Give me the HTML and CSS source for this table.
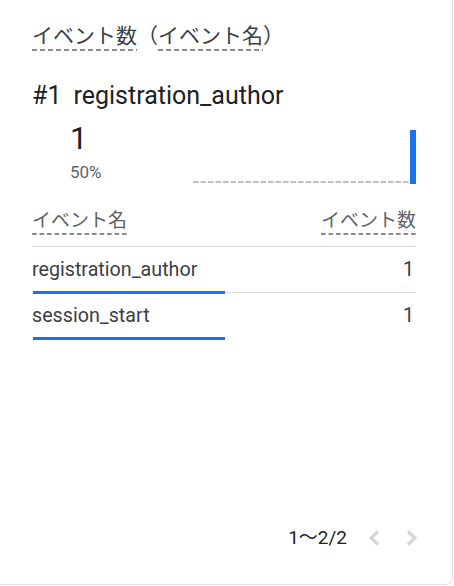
FILE: index.html
```html
<!DOCTYPE html>
<html lang="ja">
<head>
<meta charset="utf-8">
<title>イベント数（イベント名）</title>
<link rel="stylesheet" href="styles.css">
</head>
<body>
<div class="card">
  <div class="title">
    <span class="dim">イベント数</span><span class="paren">（</span><span class="dim">イベント名</span><span class="paren">）</span>
  </div>
  <div class="headline"><span class="rank">#1</span><span>registration_author</span></div>
  <div class="metrics">
    <div class="metric-values">
      <div class="big">1</div>
      <div class="pct">50%</div>
    </div>
    <div class="spark">
      <div class="baseline"></div>
      <div class="bar"></div>
    </div>
  </div>
  <div class="table">
    <div class="thead">
      <span class="hcell dim-sm">イベント名</span>
      <span class="hcell dim-sm">イベント数</span>
    </div>
    <div class="row">
      <span class="name">registration_author</span>
      <span class="val">1</span>
      <div class="rowbar" style="width:50%"></div>
    </div>
    <div class="row last">
      <span class="name">session_start</span>
      <span class="val">1</span>
      <div class="rowbar" style="width:50%"></div>
    </div>
  </div>
  <div class="pager">
    <span class="range">1〜2/2</span>
    <svg class="chev prev" viewBox="0 0 12 16" width="12" height="16"><polyline points="10,1.5 3.2,8 10,14.5"/></svg>
    <svg class="chev next" viewBox="0 0 12 16" width="12" height="16"><polyline points="2,1.5 8.8,8 2,14.5"/></svg>
  </div>
</div>
</body>
</html>
```
FILE: styles.css
```css
html, body {
  margin: 0;
  padding: 0;
  background: #ffffff;
}
body {
  font-family: Roboto, "Noto Sans CJK JP", sans-serif;
  color: #202124;
}
.card {
  box-sizing: border-box;
  width: 453px;
  height: 585px;
  border-right: 1px solid #e3e3e3;
  border-bottom: 1px solid #e3e3e3;
  border-bottom-right-radius: 8px;
  padding: 23px 36px 31px 32px;
  display: flex;
  flex-direction: column;
}
.title {
  display: flex;
  align-items: flex-start;
  font-size: 21px;
  line-height: 26px;
  color: #3c4043;
}
.dim {
  display: block;
  padding-bottom: 2px;
  background-image: linear-gradient(to right, #8a8e93 0 5px, transparent 5px 8px);
  background-size: 8px 2px;
  background-repeat: repeat-x;
  background-position: 0 100%;
}
.headline {
  margin-top: 30px;
  font-size: 25px;
  line-height: 30px;
  color: #202124;
  display: flex;
}
.rank {
  margin-right: 12px;
}
.metrics {
  margin-top: 10px;
  display: flex;
  padding-left: 38px;
}
.metric-values {
  flex: 1;
}
.big {
  font-size: 31px;
  line-height: 36px;
  color: #202124;
}
.pct {
  margin-top: 5px;
  font-size: 17px;
  line-height: 20px;
  color: #5f6368;
}
.spark {
  margin-top: 9px;
  width: 223px;
  height: 54px;
  display: flex;
  align-items: flex-end;
}
.baseline {
  flex: 1;
  height: 2px;
  margin-bottom: 1px;
  background-image: linear-gradient(to right, #bdc1c6 0 5.7px, transparent 5.7px 7.5px);
  background-size: 7.5px 2px;
  background-repeat: repeat-x;
}
.bar {
  width: 6px;
  height: 54px;
  background: #1a73e8;
}
.table {
  margin-top: 25px;
}
.thead {
  display: flex;
  justify-content: space-between;
  align-items: flex-start;
  padding-bottom: 11px;
  border-bottom: 1px solid #dadce0;
  font-size: 19px;
  line-height: 24px;
  color: #5f6368;
}
.dim-sm {
  padding-bottom: 2px;
  background-image: linear-gradient(to right, #8a8e93 0 5px, transparent 5px 7.5px);
  background-size: 7.5px 2px;
  background-repeat: repeat-x;
  background-position: 0 100%;
}
.row {
  position: relative;
  height: 45px;
  display: flex;
  justify-content: space-between;
  align-items: center;
  border-bottom: 1px solid #dadce0;
  font-size: 19.7px;
  color: #3c4043;
}
.row.last {
  border-bottom: none;
}
.val {
  padding-right: 2px;
}
.rowbar {
  position: absolute;
  left: 1px;
  bottom: -2px;
  height: 3px;
  background: #1a73e8;
}
.pager {
  margin-top: auto;
  display: flex;
  align-items: center;
  justify-content: flex-end;
  height: 30px;
  margin-right: -2px;
}
.range {
  font-size: 19px;
  line-height: 24px;
  color: #202124;
  margin-right: 21px;
}
.chev {
  display: block;
  fill: none;
  stroke: #d3d5d8;
  stroke-width: 3.2;
}
.chev + .chev {
  margin-left: 26px;
}
```
